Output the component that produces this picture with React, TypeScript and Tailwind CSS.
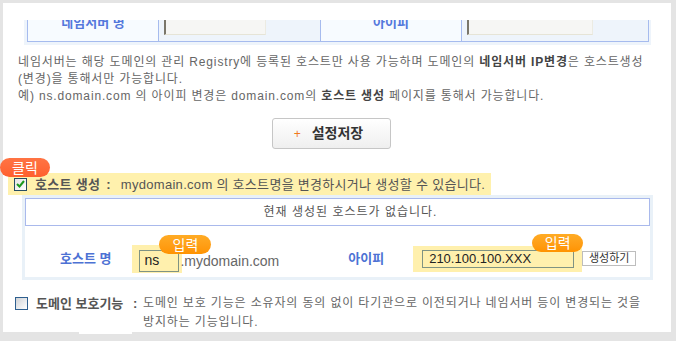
import React from "react";

const FONT = { fontFamily: '"Liberation Sans", "Noto Sans CJK KR", sans-serif' };

const Badge: React.FC<{ text: string; className: string }> = ({ text, className }) => (
  <span
    className={`absolute flex items-center justify-center rounded-full text-[13px] leading-none text-white ${className}`}
  >
    {text}
  </span>
);

const CheckBox: React.FC<{ checked?: boolean }> = ({ checked }) => (
  <span
    className={`flex h-[13px] w-[13px] shrink-0 items-center justify-center border ${
      checked
        ? "border-[#264d63] bg-gradient-to-br from-[#e4e4e4] to-white"
        : "border-[#2e5f8f] bg-gradient-to-br from-[#cfd2d6] to-white"
    }`}
  >
    {checked && (
      <svg width="9" height="8" viewBox="0 0 9 8">
        <path d="M1 4 L3.5 6.5 L8 1" stroke="#1c9a1c" strokeWidth="2" fill="none" />
      </svg>
    )}
  </span>
);

export default function App() {
  return (
    <div
      className="relative h-[341px] w-[676px] bg-[#e4e4e4] pb-[9px] pl-[3px] pr-[5px] pt-[3px] text-[#666]"
      style={FONT}
    >
      <div className="relative h-full bg-white pt-[17px]">
        {/* 네임서버 표 (위쪽이 잘려 보임) */}
        <div className="ml-[21px] h-[25px] w-[627px] overflow-hidden bg-[#eef4fb] pb-[3px] pl-[3px] pr-[2px]">
          <div className="flex h-[22px] border-x border-b border-[#a6bbee]">
            <div className="flex w-[131px] justify-center border-r border-[#a6bbee] bg-[#f7fbff]">
              <span className="-mt-[4px] text-[13px] font-bold leading-[13px] text-[#5478dc]">네임서버 명</span>
            </div>
            <div className="w-[162px] border-r border-[#a6bbee] pl-[5px]">
              <div className="h-[15px] w-[102px] border-b border-l-2 border-r border-b-[#e6e4d6] border-l-[#7a766a] border-r-[#ecebe2] bg-[#f6f6f4]" />
            </div>
            <div className="flex w-[141px] justify-center border-r border-[#a6bbee] bg-[#f7fbff]">
              <span className="-mt-[4px] text-[13px] font-bold leading-[13px] text-[#5478dc]">아이피</span>
            </div>
            <div className="flex-1 pl-[5px]">
              <div className="h-[15px] w-[126px] border-b border-l-2 border-r border-b-[#e6e4d6] border-l-[#7a766a] border-r-[#ecebe2] bg-[#f6f6f4]" />
            </div>
          </div>
        </div>

        {/* 안내 문구 */}
        <div className="mt-[9px] pl-[15px] text-[12px] leading-[16.8px] tracking-[0.85px]">
          <p>
            네임서버는 해당 도메인의 관리 Registry에 등록된 호스트만 사용 가능하며 도메인의{" "}
            <b className="text-[#444]">네임서버 IP변경</b>은 호스트생성
          </p>
          <p>(변경)을 통해서만 가능합니다.</p>
          <p>
            예) ns.domain.com 의 아이피 변경은 domain.com의 <b className="text-[#444]">호스트 생성</b> 페이지를 통해서 가능합니다.
          </p>
        </div>

        {/* 설정저장 버튼 */}
        <button className="ml-[269px] mt-[14px] flex h-[31px] w-[119px] items-center justify-center gap-[11px] rounded-[3px] border border-[#c6c6c6] bg-gradient-to-b from-white to-[#efefef] pr-[6px] text-[14px] font-semibold text-[#333]">
          <span className="text-[12px] font-normal text-[#f07a1a]">+</span>
          설정저장
        </button>

        {/* 호스트 생성 */}
        <div className="relative ml-[5px] mt-[24px] flex h-[22px] w-[483px] items-center gap-[8px] bg-[#fff1ad] pl-[6px] text-[13px] text-[#555]">
          <Badge text="클릭" className="-left-[8px] -top-[15px] h-[19px] w-[50px] bg-gradient-to-b from-[#ff7444] to-[#ff5f2e] text-[14px]" />
          <CheckBox checked />
          <span className="tracking-[0.3px]">
            <b>호스트 생성</b> <b className="ml-[2px]">:</b>
            <span className="ml-[10px]">mydomain.com 의 호스트명을 변경하시거나 생성할 수 있습니다.</span>
          </span>
        </div>

        <div className="ml-[19px] w-[631px] bg-[#e9f1f8] p-[3px]">
          <div className="flex h-[28px] items-center justify-center border border-[#a9b9ec] bg-white pl-[26px] text-[12px] tracking-[1px] text-[#555]">
            현재 생성된 호스트가 없습니다.
          </div>
          <div className="flex h-[51px] items-center bg-white pt-[14px]">
            <span className="ml-[35px] text-[13px] font-bold text-[#4d72d4]">호스트 명</span>
            <div className="relative ml-[21px] h-[28px] w-[50px] bg-[#fff0ad] pl-[7px] pt-[5px]">
              <div className="flex h-[22px] w-[40px] items-center border border-[#7f9383] pl-[4px] text-[14px] text-[#222]">
                ns
              </div>
            </div>
            <span className="relative -ml-[2px] mt-[6px] text-[14px] text-[#666]">
              <Badge text="입력" className="-left-[21px] -top-[16px] h-[19px] w-[52px] bg-gradient-to-b from-[#ffab24] to-[#ff9300] text-[14px]" />
              .mydomain.com
            </span>
            <span className="ml-[69px] text-[13px] font-bold text-[#4d72d4]">아이피</span>
            <div className="relative ml-[29px] h-[26px] w-[169px] bg-[#fff0ad] pl-[9px] pt-[4px]">
              <Badge text="입력" className="left-[119px] -top-[12px] h-[18px] w-[51px] bg-gradient-to-b from-[#ffab24] to-[#ff9300] text-[14px]" />
              <div className="flex h-[18px] w-[152px] items-center border border-[#7f9383] pl-[6px] text-[13px] text-[#222]">
                210.100.100.XXX
              </div>
            </div>
            <button className="flex h-[15px] w-[54px] items-center justify-center border border-[#bdbdbd] bg-white text-[11px] leading-none text-[#333]">
              생성하기
            </button>
          </div>
        </div>

        {/* 도메인 보호기능 */}
        <div className="mt-[14px] flex items-start pl-[12px]">
          <span className="mt-[3px]">
            <CheckBox />
          </span>
          <span className="ml-[8px] w-[107px] shrink-0 text-[13px] font-bold leading-[19px] text-[#555]">
            도메인 보호기능 <span className="ml-[6px]">:</span>
          </span>
          <p className="text-[12px] leading-[19px] tracking-[0.85px]">
            도메인 보호 기능은 소유자의 동의 없이 타기관으로 이전되거나 네임서버 등이 변경되는 것을
            <br />
            방지하는 기능입니다.
          </p>
        </div>

        <div className="absolute bottom-[-2px] left-[76px] h-[2px] w-[53px] bg-white" />
      </div>
    </div>
  );
}
